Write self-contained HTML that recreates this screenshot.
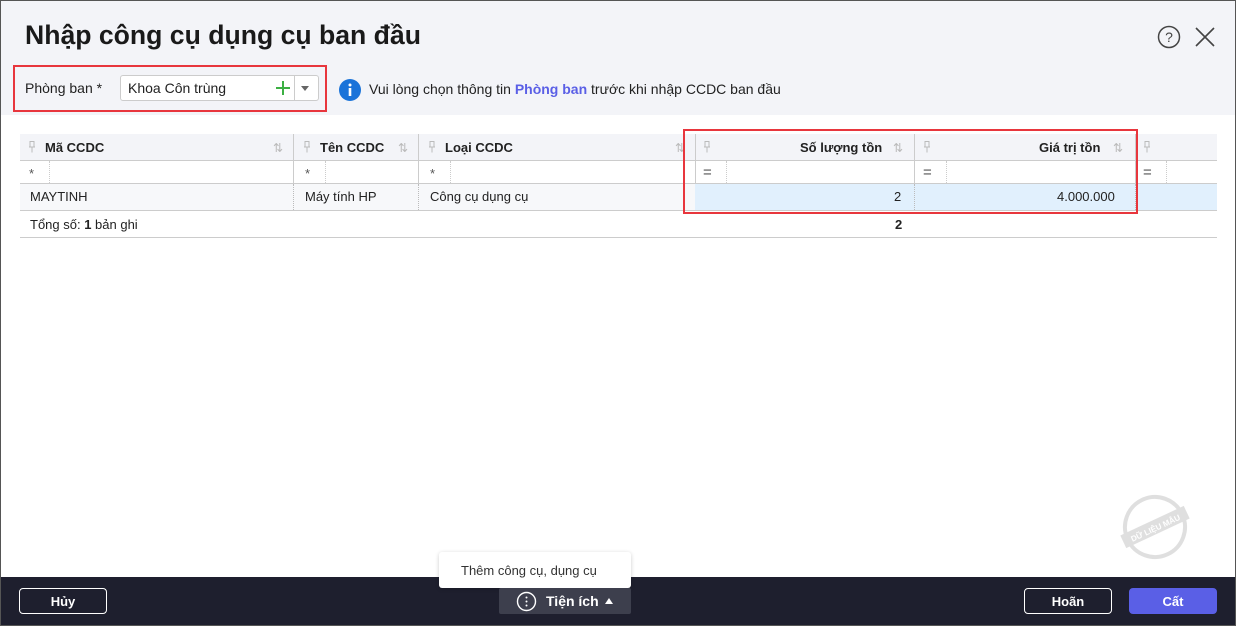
<!DOCTYPE html>
<html><head><meta charset="utf-8"><style>
*{box-sizing:border-box;margin:0;padding:0}
body{width:1236px;height:626px;overflow:hidden;font-family:"Liberation Sans",Arial,sans-serif;font-size:13px;color:#222;background:#fff;position:relative}
.hdr{position:absolute;left:0;top:0;width:1236px;height:115px;background:#f3f4f8}
.title{position:absolute;left:25px;top:20px;font-size:26.6px;font-weight:bold;color:#1a1a1a}
.abs{position:absolute}
.hline{position:absolute;height:1px;background:#ccc;left:20px;width:1197px}
.vl{position:absolute;width:1px}
.th{font-weight:bold;font-size:13px}
.sort{color:#bbb;font-size:12px}
.pin{position:absolute;width:8px;height:12px}
.btn{position:absolute;top:588px;height:26px;border:1px solid #fff;border-radius:4px;color:#fff;font-weight:bold;display:flex;align-items:center;justify-content:center;font-size:13px}
</style></head><body>
<div class="hdr"></div>
<div class="title">Nhập công cụ dụng cụ ban đầu</div>
<svg class="abs" style="left:1157px;top:25px" width="24" height="24"><circle cx="12" cy="12" r="10.5" fill="none" stroke="#444" stroke-width="1.5"/><text x="12" y="17" text-anchor="middle" font-size="14" font-family="Liberation Sans" fill="#444">?</text></svg>
<svg class="abs" style="left:1194px;top:26px" width="22" height="22"><path d="M2 2L20 20M20 2L2 20" stroke="#444" stroke-width="1.6"/></svg>
<div class="abs" style="left:13px;top:65px;width:314px;height:47px;border:2px solid #e8363d"></div>
<div class="abs" style="left:25px;top:80px;font-size:14px;color:#222">Phòng ban *</div>
<div class="abs" style="left:120px;top:75px;width:199px;height:26px;background:#fff;border:1px solid #ccc;border-radius:3px"></div>
<div class="abs" style="left:128px;top:80px;font-size:14px;color:#222">Khoa Côn trùng</div>
<svg class="abs" style="left:276px;top:81px" width="14" height="14"><path d="M7 0V14M0 7H14" stroke="#3cb043" stroke-width="2"/></svg>
<div class="abs" style="left:294px;top:76px;width:1px;height:24px;background:#ccc"></div>
<div class="abs" style="left:301px;top:86px;border-left:4px solid transparent;border-right:4px solid transparent;border-top:5px solid #666"></div>
<svg class="abs" style="left:339px;top:79px" width="22" height="22"><circle cx="11" cy="11" r="11" fill="#1a73d9"/><rect x="9.7" y="9" width="2.6" height="8" fill="#fff"/><circle cx="11" cy="6" r="1.5" fill="#fff"/></svg>
<div class="abs" style="left:369px;top:81px;font-size:14px;color:#222">Vui lòng chọn thông tin <b style="color:#5a5fe6">Phòng ban</b> trước khi nhập CCDC ban đầu</div>

<div class="abs" style="left:20px;top:134px;width:1197px;height:26px;background:#f3f4f8"></div>
<div class="abs" style="left:695px;top:184px;width:522px;height:26px;background:#e1f0fd"></div>
<div class="abs" style="left:20px;top:184px;width:675px;height:26px;background:#f7f8fa"></div>
<div class="hline" style="top:160px"></div>
<div class="hline" style="top:183px"></div>
<div class="hline" style="top:210px"></div>
<div class="hline" style="top:237px"></div>
<div class="vl" style="left:293px;top:134px;height:50px;background:#ccc"></div>
<div class="vl" style="left:418px;top:134px;height:50px;background:#ccc"></div>
<div class="vl" style="left:695px;top:134px;height:50px;background:#ccc"></div>
<div class="vl" style="left:914px;top:134px;height:50px;background:#ccc"></div>
<div class="vl" style="left:1135px;top:134px;height:50px;background:#ccc"></div>
<div class="vl" style="left:293px;top:184px;height:26px;border-left:1px dotted #bbb"></div>
<div class="vl" style="left:418px;top:184px;height:26px;border-left:1px dotted #bbb"></div>
<div class="vl" style="left:914px;top:184px;height:26px;border-left:1px dotted #bbb"></div>
<div class="vl" style="left:1135px;top:184px;height:26px;border-left:1px dotted #bbb"></div>
<div class="vl" style="left:49px;top:161px;height:22px;border-left:1px dotted #ccc"></div>
<div class="vl" style="left:325px;top:161px;height:22px;border-left:1px dotted #ccc"></div>
<div class="vl" style="left:450px;top:161px;height:22px;border-left:1px dotted #ccc"></div>
<div class="vl" style="left:726px;top:161px;height:22px;border-left:1px dotted #ccc"></div>
<div class="vl" style="left:946px;top:161px;height:22px;border-left:1px dotted #ccc"></div>
<div class="vl" style="left:1166px;top:161px;height:22px;border-left:1px dotted #ccc"></div>

<svg class="pin" style="left:28px;top:141px" viewBox="0 0 8 12"><path d="M2 0.5H6V6H2Z M1 6H7 M4 6V11.5" fill="none" stroke="#bbb"/></svg>
<svg class="pin" style="left:303px;top:141px" viewBox="0 0 8 12"><path d="M2 0.5H6V6H2Z M1 6H7 M4 6V11.5" fill="none" stroke="#bbb"/></svg>
<svg class="pin" style="left:428px;top:141px" viewBox="0 0 8 12"><path d="M2 0.5H6V6H2Z M1 6H7 M4 6V11.5" fill="none" stroke="#bbb"/></svg>
<svg class="pin" style="left:703px;top:141px" viewBox="0 0 8 12"><path d="M2 0.5H6V6H2Z M1 6H7 M4 6V11.5" fill="none" stroke="#bbb"/></svg>
<svg class="pin" style="left:923px;top:141px" viewBox="0 0 8 12"><path d="M2 0.5H6V6H2Z M1 6H7 M4 6V11.5" fill="none" stroke="#bbb"/></svg>
<svg class="pin" style="left:1143px;top:141px" viewBox="0 0 8 12"><path d="M2 0.5H6V6H2Z M1 6H7 M4 6V11.5" fill="none" stroke="#bbb"/></svg>
<div class="abs th" style="left:45px;top:140px">Mã CCDC</div>
<div class="abs th" style="left:320px;top:140px">Tên CCDC</div>
<div class="abs th" style="left:445px;top:140px">Loại CCDC</div>
<div class="abs th" style="left:800px;top:140px">Số lượng tồn</div>
<div class="abs th" style="left:1039px;top:140px">Giá trị tồn</div>
<div class="abs sort" style="left:273px;top:141px">⇅</div>
<div class="abs sort" style="left:398px;top:141px">⇅</div>
<div class="abs sort" style="left:675px;top:141px">⇅</div>
<div class="abs sort" style="left:893px;top:141px">⇅</div>
<div class="abs sort" style="left:1113px;top:141px">⇅</div>
<div class="abs" style="left:29px;top:166px;color:#555">*</div>
<div class="abs" style="left:305px;top:166px;color:#555">*</div>
<div class="abs" style="left:430px;top:166px;color:#555">*</div>
<div class="abs" style="left:703px;top:164px;color:#555;font-size:15px">=</div>
<div class="abs" style="left:923px;top:164px;color:#555;font-size:15px">=</div>
<div class="abs" style="left:1143px;top:164px;color:#555;font-size:15px">=</div>
<div class="abs" style="left:30px;top:189px">MAYTINH</div>
<div class="abs" style="left:305px;top:189px">Máy tính HP</div>
<div class="abs" style="left:430px;top:189px">Công cụ dụng cụ</div>
<div class="abs" style="left:894px;top:189px">2</div>
<div class="abs" style="left:1057px;top:189px">4.000.000</div>
<div class="abs" style="left:30px;top:217px">Tổng số: <b>1</b> bản ghi</div>
<div class="abs" style="left:895px;top:217px;font-weight:bold">2</div>
<div class="abs" style="left:683px;top:129px;width:455px;height:85px;border:2px solid #e8363d"></div>

<svg class="abs" style="left:1115px;top:490px" width="80" height="75"><g transform="rotate(-25 40 37)" opacity="0.3"><circle cx="40" cy="37" r="30" fill="none" stroke="#999" stroke-width="4"/><rect x="5" y="30" width="70" height="14" fill="#999"/><text x="40" y="41" text-anchor="middle" font-size="8" font-weight="bold" fill="#fff" font-family="Liberation Sans">DỮ LIỆU MẪU</text></g></svg>

<div class="abs" style="left:0;top:577px;width:1236px;height:49px;background:#1e1f2e"></div>
<div class="abs" style="left:439px;top:552px;width:192px;height:36px;background:#fff;border-radius:3px;box-shadow:0 1px 4px rgba(0,0,0,.2)"></div>
<div class="abs" style="left:461px;top:563px;color:#333">Thêm công cụ, dụng cụ</div>
<div class="btn" style="left:19px;width:88px">Hủy</div>
<div class="abs" style="left:499px;top:588px;width:132px;height:26px;background:#3d3f4d;border-radius:2px"></div>
<svg class="abs" style="left:516px;top:591px" width="21" height="21"><circle cx="10.5" cy="10.5" r="9" fill="none" stroke="#fff" stroke-width="1.4"/><circle cx="10.5" cy="6.5" r="1" fill="#fff"/><circle cx="10.5" cy="10.5" r="1" fill="#fff"/><circle cx="10.5" cy="14.5" r="1" fill="#fff"/></svg>
<div class="abs" style="left:546px;top:593px;color:#fff;font-weight:bold;font-size:14px">Tiện ích</div>
<div class="abs" style="left:605px;top:598px;border-left:4px solid transparent;border-right:4px solid transparent;border-bottom:6px solid #fff"></div>
<div class="btn" style="left:1024px;width:88px">Hoãn</div>
<div class="btn" style="left:1129px;width:88px;background:#5a5fe6;border-color:#5a5fe6">Cất</div>
<div class="abs" style="left:0;top:0;width:1236px;height:626px;border:1px solid #555;pointer-events:none"></div>
</body></html>
